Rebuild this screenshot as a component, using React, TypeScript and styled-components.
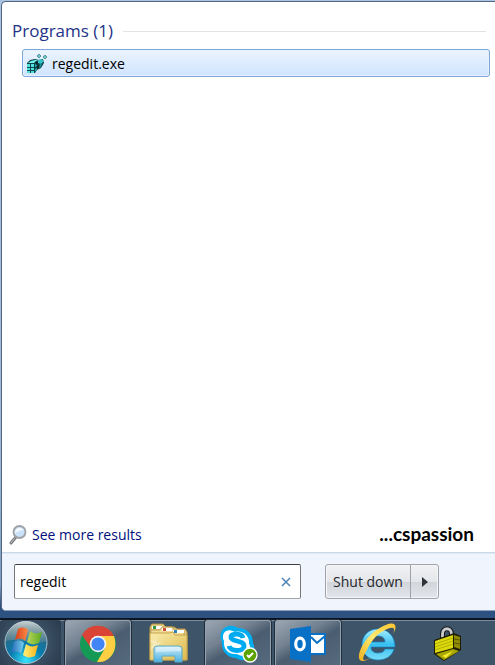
import React, { useState } from "react";
import styled, { createGlobalStyle } from "styled-components";

const GlobalStyle = createGlobalStyle`
  * { box-sizing: border-box; }
  body {
    margin: 0;
    background: #2d5180;
    font-family: "Open Sans", "Noto Sans", sans-serif;
    font-size: 14px;
    line-height: 20px;
    color: #000;
  }
  button, input { font: inherit; color: inherit; }
`;

const Desktop = styled.div`
  min-height: 100vh;
  display: flex;
  flex-direction: column;
  padding: 1px 0 0 1px;
  background: linear-gradient(#a9c4e0 0, #9cb8d6 70%, #7c9bc0 88%, #2d5180 91%);
`;

const StartMenu = styled.main`
  flex: 1;
  display: flex;
  flex-direction: column;
  border: 1px solid #55677e;
  border-right: 0;
  border-bottom-color: #8ba1bd;
  border-radius: 5px 0 0 5px;
  overflow: hidden;
  background: #fff;
`;

const Results = styled.section`
  flex: 1;
  display: flex;
  flex-direction: column;
  padding: 17px 5px 6px 7px;
`;

const GroupHeading = styled.h1`
  display: flex;
  align-items: center;
  gap: 10px;
  margin: 0 4px 6px 3px;
  font-size: 17px;
  line-height: 24px;
  font-weight: 400;
  color: #1e3287;

  &::after {
    content: "";
    flex: 1;
    height: 1px;
    background: #e2e3e5;
  }
`;

const ResultList = styled.ul`
  list-style: none;
  margin: 0 0 auto 13px;
  padding: 0;
`;

const ResultButton = styled.button`
  display: flex;
  align-items: center;
  gap: 5px;
  width: 100%;
  height: 28px;
  padding: 1px 4px 0;
  border: 1px solid #7da7d9;
  border-radius: 3px;
  background: linear-gradient(#ebf4fe, #cfe4fe);
  box-shadow: inset 0 0 0 1px #e5f1ff;
  text-align: left;
`;

const ResultsFooter = styled.div`
  display: flex;
  align-items: center;
  justify-content: space-between;
  padding-right: 16px;
`;

const MoreLink = styled.a`
  display: flex;
  align-items: center;
  gap: 5px;
  color: #00107c;
  text-decoration: none;
`;

const Signature = styled.strong`
  font-family: Lato, "Open Sans", sans-serif;
  font-size: 19px;
  line-height: 20px;
  padding-bottom: 2px;
  font-weight: 700;
`;

const Controls = styled.footer`
  display: flex;
  align-items: flex-start;
  gap: 24px;
  padding: 11px 12px;
  height: 58px;
  border-top: 1px solid #c9d9e9;
  background: #f0f4fc;
  box-shadow: inset 0 1px 0 #dfe9f5;
`;

const SearchBox = styled.form`
  display: flex;
  align-items: center;
  flex: 0 1 287px;
  height: 35px;
  padding: 0 7px 0 5px;
  border: 1px solid #747678;
  border-top-color: #3d3f42;
  border-bottom-color: #a3a5a9;
  border-radius: 2px;
  background: #fff;
`;

const SearchInput = styled.input`
  flex: 1;
  min-width: 0;
  padding: 0;
  border: 0;
  outline: 0;
  background: transparent;
`;

const ClearButton = styled.button`
  display: grid;
  place-items: center;
  width: 14px;
  height: 20px;
  padding: 0;
  border: 0;
  background: none;
`;

const PowerGroup = styled.div`
  display: flex;
  height: 35px;
  border: 1px solid #a0a3a9;
  border-radius: 3px;
  background: linear-gradient(#f1f2f4 0, #e4e6e9 50%, #d2d5da 53%, #e2e5e9 100%);
  box-shadow: inset 0 0 0 1px #f5f6f8;
`;

const PowerButton = styled.button<{ $menu?: boolean }>`
  display: grid;
  place-items: center;
  width: ${(p) => (p.$menu ? 28 : 84)}px;
  padding: 0;
  border: 0;
  border-left: ${(p) => (p.$menu ? "1px solid #a0a3a9" : "0")};
  background: none;
  color: #24272c;
`;

const Taskbar = styled.nav`
  display: flex;
  gap: 4px;
  height: 47px;
  margin: 7px 0 0 -1px;
  border-top: 2px solid #0c1421;
  background: #3d5469;
  box-shadow: inset 0 1px 0 #7b8a9c;
`;

const TaskButton = styled.button<{ $start?: boolean; $open?: boolean }>`
  display: grid;
  place-items: center;
  flex: none;
  width: ${(p) => (p.$start ? 61 : 66)}px;
  padding: ${(p) => (p.$start ? "0 9px 0 0" : "1px 0 0")};
  border: ${(p) => (p.$open ? "1px solid #94a0ae" : "0")};
  border-bottom: 0;
  border-radius: 3px 3px 0 0;
  background: ${(p) =>
    p.$open
      ? "linear-gradient(150deg, #9ba6b2 0, #72808f 36%, #4b5e71 54%, #566a7e 100%)"
      : p.$start
        ? "radial-gradient(circle at 45% 50%, #557268 0, #3a5064 50%, #2a3a4c 100%)"
        : "transparent"};
  box-shadow: ${(p) => (p.$open ? "0 0 0 1px #202d3b" : "none")};
`;

const Icon = styled.svg`
  display: block;
  flex: none;
`;

const RegeditIcon = () => (
  <Icon width="20" height="20" viewBox="0 0 20 20" aria-hidden="true">
    <path d="M0 9 3 6l5-1 4 1 4-1 1 4-3 5-4 2-2 3H0Z" fill="#0f4549" />
    <path d="M0 10h3v3H0zm4 0h3v3H4zm-4 4h3v2H0zm4 0h3v2H4zm-4 3h3v2H0zm4 0h3v2H4z" fill="#4fe0e0" />
    <path d="m1 9 3-2 4-1h3L8 8 7 9Z" fill="#6feeea" />
    <path d="m8 10 2-1v3l-2 1zm0 5 2-1v2l-2 2z" fill="#1da3aa" />
    <path d="m11 6 3-1 3 2-3 3-3-1Z" fill="#35c5c9" />
    <path d="m13 10 2-1-1 4-2 1Z" fill="#1b8d92" />
    <path d="m8 8 2-1 1 3-2 1Zm2 4 2-1v3l-2 1Z" fill="#08262a" />
    <path d="m12 0 2 2-2 2-2-2Zm6 1 2 2-2 2-2-2Z" fill="#6fc6c8" stroke="#41858b" strokeWidth=".8" />
  </Icon>
);

const MagnifierIcon = () => (
  <Icon width="18" height="20" viewBox="0 0 18 20" aria-hidden="true">
    <path d="m7 12-5 6" stroke="#77797c" strokeWidth="3" strokeLinecap="round" />
    <path d="m6 13-4 5" stroke="#bcbdbf" strokeLinecap="round" />
    <circle cx="10.5" cy="7" r="6" fill="#c9e2fa" stroke="#a0a1a4" strokeWidth="1.8" />
    <path d="M6 8c0-3 2-5 5-5 2 0 3 1 4 2-3 0-6 1-9 3Z" fill="#f4faff" />
  </Icon>
);

const WindowsIcon = () => (
  <Icon width="46" height="45" viewBox="0 0 46 45" aria-hidden="true">
    <defs>
      <radialGradient id="orb" cx=".5" cy=".92" r=".85">
        <stop offset="0" stopColor="#35e4ff" />
        <stop offset=".45" stopColor="#087cae" />
        <stop offset="1" stopColor="#3c6072" />
      </radialGradient>
      <linearGradient id="orbShine" x2="0" y2="1">
        <stop stopColor="#c6d2d6" /><stop offset="1" stopColor="#8a9c98" stopOpacity=".3" />
      </linearGradient>
      <linearGradient id="redPane"><stop stopColor="#d8401c" /><stop offset="1" stopColor="#ff8a45" /></linearGradient>
      <linearGradient id="greenPane"><stop stopColor="#b9d65a" /><stop offset="1" stopColor="#5baa22" /></linearGradient>
      <linearGradient id="bluePane"><stop stopColor="#2468b8" /><stop offset="1" stopColor="#78d0ef" /></linearGradient>
      <linearGradient id="yellowPane"><stop stopColor="#fff17a" /><stop offset="1" stopColor="#f8b41c" /></linearGradient>
    </defs>
    <circle cx="23" cy="22.5" r="21" fill="url(#orb)" stroke="#a8c4d1" />
    <path d="M3 21a20 20 0 0 1 40 0c-10 5-28-4-40 0Z" fill="url(#orbShine)" />
    <path d="M15 9c4-2 7-2 10 1l-3 11c-3-3-6-3-10-1Z" fill="url(#redPane)" />
    <path d="M27 11c4 3 7 3 12 1l-3 11c-5 2-8 2-12-1Z" fill="url(#greenPane)" />
    <path d="M11 22c4-2 7-2 10 1l-3 11c-3-3-6-3-10-1Z" fill="url(#bluePane)" />
    <path d="M23 24c4 3 7 3 12 1l-3 11c-5 2-8 2-12-1Z" fill="url(#yellowPane)" />
  </Icon>
);

const ChromeIcon = () => (
  <Icon width="38" height="38" viewBox="0 0 38 38" aria-hidden="true">
    <circle cx="19" cy="19" r="18" fill="#159957" />
    <path d="M19 19 12 23 3 10A18 18 0 0 1 35 11H19Z" fill="#da4437" />
    <path d="M19 11h16c2 5 3 17-6 23-4 3-7 3-11 3l8-14Z" fill="#ffcf43" />
    <circle cx="19" cy="19" r="8.3" fill="#f3f3f3" />
    <circle cx="19" cy="19" r="6.6" fill="#4285f4" />
  </Icon>
);

const ExplorerIcon = () => (
  <Icon width="40" height="40" viewBox="0 0 40 40" aria-hidden="true">
    <defs>
      <linearGradient id="folder" x2="1" y2="1"><stop stopColor="#faeeb1" /><stop offset="1" stopColor="#ddb94a" /></linearGradient>
      <linearGradient id="stand" x2="0" y2="1"><stop stopColor="#d2effa" /><stop offset="1" stopColor="#4aafe0" /></linearGradient>
    </defs>
    <path d="M2 37V4l2-3h11l3 3h8l3 2h8l2 3v28Z" fill="#dfc77d" stroke="#b39348" />
    <path d="M4 3h10v3H4z" fill="#fff" /><path d="M5 3h3v3H5z" fill="#319a47" />
    <path d="M3 7h9l2-3h10l3 4h9v25H3Z" fill="#f2dc94" stroke="#bda259" />
    <path d="M14 5h10v3H14z" fill="#fff" /><path d="M15 5h3v3h-3z" fill="#cf4938" />
    <path d="M25 7h11v3H25z" fill="#fff" /><path d="M26 7h3v3h-3z" fill="#287fba" />
    <path d="M2 10h20l3-1 2 3h12v25H2Z" fill="url(#folder)" stroke="#c5a54d" />
    <path d="m7 13 2 7 6-2-5 4 2 8-5-6-5 3 3-6-3-4 5 1Z" fill="#fff" opacity=".35" />
    <path d="M6 39V26q0-3 3-3h22q3 0 3 3v13h-7v-6H14v6Z" fill="url(#stand)" stroke="#5babc9" />
    <path d="M8 29V26q0-2 3-2h19q3 0 3 2v2Z" fill="#fff" opacity=".4" />
  </Icon>
);

const SkypeIcon = () => (
  <Icon width="40" height="40" viewBox="0 0 40 40" aria-hidden="true">
    <path d="M11 2c4-1 7 1 9 2 9 0 15 6 15 15 4 9-1 16-9 17-5 1-7-2-9-2-9-1-14-8-13-16C0 11 4 3 11 2Z" fill="#00aef0" />
    <path d="M8 7c4-2 7 0 9 1 8-2 15 4 14 12 3 4 0 10-4 11-4 2-7-1-9-1-7 1-13-5-12-13-2-4-1-8 2-10Z" fill="#fff" />
    <path d="M25 14c-1-5-12-5-12-1 0 5 13 3 13 9 0 6-14 6-15 0" fill="none" stroke="#00aaf1" strokeWidth="4.8" />
    <circle cx="32" cy="31" r="7" fill="#5da300" stroke="#fff" strokeWidth="1.3" />
    <path d="m29 31 2 2 4-4" fill="none" stroke="#fff" strokeWidth="2" />
  </Icon>
);

const OutlookIcon = () => (
  <Icon width="38" height="38" viewBox="0 0 38 38" aria-hidden="true">
    <path d="M21 8h16v22H21z" fill="#0871c5" />
    <path d="M22 10h13v18H22Z" fill="#fff" />
    <path d="m22 12 6 6 8-7" fill="none" stroke="#0871c5" strokeWidth="2" />
    <path d="M1 4 22 1v36L1 34Z" fill="#0871c5" />
    <ellipse cx="11" cy="19" rx="4.3" ry="5.8" fill="none" stroke="#fff" strokeWidth="3.2" />
  </Icon>
);

const InternetExplorerIcon = () => (
  <Icon width="40" height="40" viewBox="0 0 40 40" aria-hidden="true">
    <defs>
      <linearGradient id="eBlue" x2="0" y2="1"><stop stopColor="#a6edff" /><stop offset=".5" stopColor="#38bff2" /><stop offset="1" stopColor="#79dcf7" /></linearGradient>
      <linearGradient id="eGold" x1="1" x2="0" y2="1"><stop stopColor="#ffc52e" /><stop offset=".5" stopColor="#ffe96f" /><stop offset="1" stopColor="#f0b020" /></linearGradient>
    </defs>
    <path d="M20 6c-10 0-16 7-16 16s7 15 16 15c8 0 14-4 16-11h-9c-1 3-4 4-7 4-4 0-7-2-7-6h24C37 13 30 6 20 6Zm-7 13c0-4 3-6 7-6s7 2 7 6Z" fill="url(#eBlue)" stroke="#1682bf" strokeWidth=".7" fillRule="evenodd" />
    <path d="M9 27C2 38 5 39 14 34c-9 6-14 5-13-2C3 20 16 6 28 2c7-3 11-1 9 5l-2 4c3-7 0-8-8-4C18 11 12 20 9 27Z" fill="url(#eGold)" />
  </Icon>
);

const LockIcon = () => (
  <Icon width="28" height="36" viewBox="0 0 28 36" aria-hidden="true">
    <path d="M8.500 16V9c0-7 9-7 9 0v5" fill="none" stroke="#17191c" strokeWidth="5" />
    <path d="M8.500 16V9c0-7 9-7 9 0v5" fill="none" stroke="#c9cbce" strokeWidth="2.800" />
    <path d="M0 15 20 8l7 3v14L10 36 0 29Z" fill="#1f1e00" />
    <path d="m1 16 18-6v13L1 28Z" fill="#dcd90e" />
    <path d="M1 19 19 13M1 22l18-6M1 25l18-6" stroke="#a9a500" strokeWidth=".8" />
    <path d="m20 10 6 2v12l-6-2Z" fill="#8f8c00" />
    <path d="m20 14 6 1m-6 3 6 1" stroke="#595600" />
    <path d="m2 29 17-5 6 2-15 9Z" fill="#aaa600" />
    <path d="m8 31 11-5-7 7Z" fill="#f0e92c" />
  </Icon>
);

const tasks = [
  { name: "Google Chrome", open: true, Glyph: ChromeIcon },
  { name: "Windows Explorer", open: false, Glyph: ExplorerIcon },
  { name: "Skype", open: true, Glyph: SkypeIcon },
  { name: "Outlook", open: true, Glyph: OutlookIcon },
  { name: "Internet Explorer", open: false, Glyph: InternetExplorerIcon },
  { name: "Lock", open: false, Glyph: LockIcon },
];

export default function App() {
  const [query, setQuery] = useState("regedit");
  return (
    <>
      <GlobalStyle />
      <Desktop>
        <StartMenu>
          <Results>
            <GroupHeading>Programs (1)</GroupHeading>
            <ResultList>
              <li><ResultButton type="button"><RegeditIcon />regedit.exe</ResultButton></li>
            </ResultList>
            <ResultsFooter>
              <MoreLink href="#results"><MagnifierIcon />See more results</MoreLink>
              <Signature>...cspassion</Signature>
            </ResultsFooter>
          </Results>
          <Controls>
            <SearchBox role="search" onSubmit={(e) => e.preventDefault()}>
              <SearchInput aria-label="Search programs and files" value={query} onChange={(e) => setQuery(e.target.value)} />
              <ClearButton type="button" aria-label="Clear search" onClick={() => setQuery("")}>
                <Icon width="10" height="10" viewBox="0 0 10 10" aria-hidden="true">
                  <path d="m1 1 8 8M9 1 1 9" stroke="#4e83b5" strokeWidth="1.5" />
                </Icon>
              </ClearButton>
            </SearchBox>
            <PowerGroup>
              <PowerButton type="button">Shut down</PowerButton>
              <PowerButton type="button" $menu aria-label="Shut down options">
                <Icon width="6" height="10" viewBox="0 0 6 10" aria-hidden="true">
                  <path d="M0 0 6 5 0 10Z" fill="#303338" />
                </Icon>
              </PowerButton>
            </PowerGroup>
          </Controls>
        </StartMenu>
        <Taskbar aria-label="Taskbar">
          <TaskButton type="button" $start aria-label="Start"><WindowsIcon /></TaskButton>
          {tasks.map(({ name, open, Glyph }) => (
            <TaskButton key={name} type="button" $open={open} aria-label={name}><Glyph /></TaskButton>
          ))}
        </Taskbar>
      </Desktop>
    </>
  );
}
